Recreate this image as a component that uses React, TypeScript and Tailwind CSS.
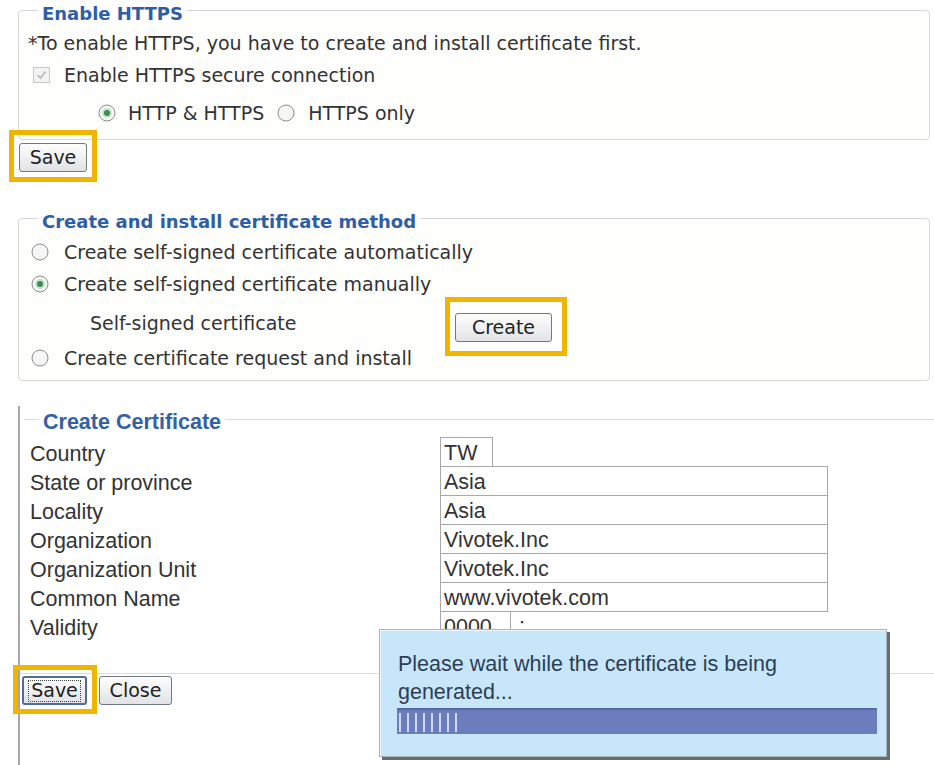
import React from "react";

const VERDANA = "font-['DejaVu_Sans',Verdana,sans-serif]";
const TAHOMA = "font-['Liberation_Sans',Tahoma,Arial,sans-serif]";

function Radio({ checked }: { checked?: boolean }) {
  return (
    <svg width="18" height="18" viewBox="0 0 18 18" className="shrink-0">
      <circle cx="9" cy="9" r="8" fill="#f6f6f6" stroke="#8e8e8e" strokeWidth="1" />
      {checked && (
        <>
          <circle cx="9" cy="9" r="5" fill="#c6e6c9" />
          <circle cx="9" cy="9" r="3" fill="#3d8b4d" />
        </>
      )}
    </svg>
  );
}

function Checkbox() {
  return (
    <svg width="17" height="16" viewBox="0 0 17 16" className="shrink-0">
      <rect x="0.5" y="0.5" width="16" height="15" fill="#f3f3f3" stroke="#c9c9c9" />
      <path d="M4.5 8 L7.5 11 L12.5 4.5" fill="none" stroke="#b4b4b4" strokeWidth="1.5" />
    </svg>
  );
}

function Legend({ children }: { children: React.ReactNode }) {
  return (
    <div className="-mt-[8px] ml-[19px] w-fit bg-white px-[4px] text-[18px] font-bold leading-[22px] text-[#2f5ea6]">
      {children}
    </div>
  );
}

function Button({ label, width, focused }: { label: string; width: string; focused?: boolean }) {
  return (
    <button
      className={`${width} flex h-[29px] items-center justify-center rounded-[3px] border bg-gradient-to-b from-[#fdfdfd] to-[#e1e3e6] text-[19px] leading-none text-[#222] ${
        focused ? "border-[#4f6d9c] border-2" : "border-[#6f7883]"
      }`}
    >
      {focused ? <span className="border border-dotted border-[#444] px-[2px] pb-[1px]">{label}</span> : label}
    </button>
  );
}

const fields = [
  { label: "Country", value: "TW", width: "w-[53px]" },
  { label: "State or province", value: "Asia", width: "w-[388px]" },
  { label: "Locality", value: "Asia", width: "w-[388px]" },
  { label: "Organization", value: "Vivotek.Inc", width: "w-[388px]" },
  { label: "Organization Unit", value: "Vivotek.Inc", width: "w-[388px]" },
  { label: "Common Name", value: "www.vivotek.com", width: "w-[388px]" },
];

export default function App() {
  return (
    <div className={`relative h-[765px] w-[934px] overflow-hidden bg-white text-[#333] ${VERDANA}`}>
      {/* Enable HTTPS */}
      <div className="ml-[18px] mt-[10px] w-[912px] rounded-[4px] border border-[#d8d8d8] bg-[#fefefd] pb-[14px]">
        <Legend>Enable HTTPS</Legend>
        <div className="mt-[6px] h-[24px] pl-[9px] text-[19px] leading-[24px]">
          *To enable HTTPS, you have to create and install certificate first.
        </div>
        <div className="mt-[8px] flex h-[24px] items-center pl-[14px] text-[19px] leading-[24px]">
          <Checkbox />
          <span className="ml-[14px]">Enable HTTPS secure connection</span>
        </div>
        <div className="mt-[14px] flex h-[24px] items-center pl-[79px] text-[19px] leading-[24px]">
          <Radio checked />
          <span className="ml-[12px]">HTTP &amp; HTTPS</span>
          <span className="ml-[13px]">
            <Radio />
          </span>
          <span className="ml-[13px]">HTTPS only</span>
        </div>
      </div>

      <div className="relative ml-[19px] mt-[3px] w-fit">
        <Button label="Save" width="w-[68px]" />
        <span className="absolute -bottom-[10px] -left-[10px] -right-[10px] -top-[13px] border-[5px] border-[#f1b500]" />
      </div>

      {/* Create and install certificate method */}
      <div className="ml-[18px] mt-[46px] w-[912px] rounded-[4px] border border-[#d8d8d8] bg-[#fefefd] pb-[10px] text-[19px] leading-[24px]">
        <Legend>Create and install certificate method</Legend>
        <div className="mt-[7px] flex h-[24px] items-center pl-[12px]">
          <Radio />
          <span className="ml-[15px]">Create self-signed certificate automatically</span>
        </div>
        <div className="mt-[8px] flex h-[24px] items-center pl-[12px]">
          <Radio checked />
          <span className="ml-[15px]">Create self-signed certificate manually</span>
        </div>
        <div className="mt-[15px] flex h-[31px] items-start">
          <span className="w-[436px] pl-[71px]">Self-signed certificate</span>
          <div className="relative mt-[2px]">
            <Button label="Create" width="w-[97px]" />
            <span className="absolute -bottom-[14px] -left-[10px] -right-[15px] -top-[16px] border-[5px] border-[#f1b500]" />
          </div>
        </div>
        <div className="mt-[4px] flex h-[24px] items-center pl-[12px]">
          <Radio />
          <span className="ml-[15px]">Create certificate request and install</span>
        </div>
      </div>

      {/* Create Certificate */}
      <div className="ml-[18px] mt-[25px] h-[359px] w-[916px] border-l-2 border-[#a6a6a6] pt-[13px]">
        <div className={`ml-[4px] border-t border-[#dcdcdc] ${TAHOMA} text-[21.5px] text-[#333]`}>
          <div className="-mt-[10px] ml-[15px] w-fit bg-white px-[4px] font-bold leading-[24px] text-[#3461a3]">
            Create Certificate
          </div>
          <div className="mt-[3px]">
            {fields.map((f) => (
              <div key={f.label} className="flex h-[29px]">
                <div className="w-[416px] pl-[6px] pt-[5px] leading-[24px]">{f.label}</div>
                <div className={`${f.width} h-[30px] border border-[#a9a9a9] bg-white pl-[3px] pt-[3px] leading-[24px]`}>
                  {f.value}
                </div>
              </div>
            ))}
            <div className="flex h-[29px]">
              <div className="w-[416px] pl-[6px] pt-[5px] leading-[24px]">Validity</div>
              <div className="h-[30px] w-[71px] border border-[#a9a9a9] bg-white pl-[3px] pt-[3px] leading-[24px]">0000</div>
              <span className="ml-[8px] pt-[3px] leading-[24px]">:</span>
            </div>
          </div>
        </div>
        <div className="mt-[33px] border-t border-[#dcdcdc]" />
        <div className="ml-[2px] mt-[2px] flex items-center">
          <div className="relative">
            <Button label="Save" width="w-[65px]" focused />
            <span className="absolute -bottom-[9px] -left-[9px] -right-[10px] -top-[11px] border-[5px] border-[#f1b500]" />
          </div>
          <div className="ml-[12px]">
            <Button label="Close" width="w-[73px]" />
          </div>
        </div>
      </div>

      {/* Progress popup */}
      <div
        className={`absolute left-[379px] top-[629px] h-[128px] w-[508px] border border-[#a7b4bf] bg-[#c8e6fa] pl-[17px] pt-[20px] shadow-[3px_3px_0_#6b6b6b,inset_1px_1px_0_#eef8ff] ${TAHOMA}`}
      >
        <div className="pl-[1px] text-[21.5px] leading-[28px] text-[#2d3d55]">
          Please wait while the certificate is being
          <br />
          generated...
        </div>
        <div className="mt-[2px] flex h-[26px] w-[480px] items-center gap-[6px] border-t-2 border-[#5b69a6] bg-[#6c7dbe] pl-[2px]">
          {Array.from({ length: 8 }).map((_, i) => (
            <span key={i} className="h-[19px] w-[2px] bg-[#d2d9f6]" />
          ))}
        </div>
      </div>
    </div>
  );
}
